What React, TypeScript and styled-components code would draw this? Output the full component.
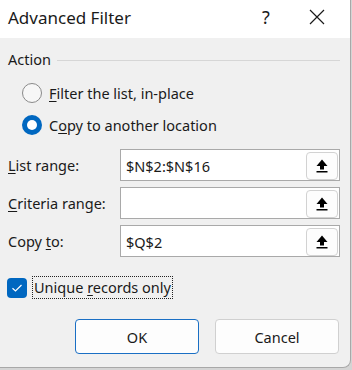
import React from "react";
import styled, { createGlobalStyle } from "styled-components";

const Global = createGlobalStyle`
  html, body { margin: 0; padding: 0; background: #d4d4d4; }
  body { width: 352px; height: 370px; overflow: hidden; }
  * { box-sizing: border-box; }
`;

const FONT = `"Noto Sans", "Open Sans", "Liberation Sans", sans-serif`;

const Dialog = styled.div`
  width: 351px;
  height: 368px;
  background: #f0f0f0;
  border-right: 1px solid #a8a8a8;
  border-bottom: 1px solid #a8a8a8;
  border-bottom-right-radius: 8px;
  font-family: ${FONT};
  color: #1a1a1a;
  overflow: hidden;
  display: flex;
  flex-direction: column;
`;

const TitleBar = styled.div`
  height: 38px;
  background: #ffffff;
  display: flex;
  align-items: center;
  padding-left: 8px;
`;

const Title = styled.div`
  font-size: 17px;
  flex: 1;
  padding-bottom: 4px;
`;

const TitleButton = styled.div<{ $w: number }>`
  width: ${(p) => p.$w}px;
  height: 38px;
  display: flex;
  align-items: center;
  justify-content: center;
  font-size: 18px;
  padding-bottom: 4px;
`;

const Body = styled.div`
  display: flex;
  flex-direction: column;
  padding: 10px 0 0 8px;
`;

const GroupHeader = styled.div`
  display: flex;
  align-items: center;
  gap: 6px;
  font-size: 14.5px;
  height: 22px;
  padding-right: 10px;
`;

const GroupLine = styled.div`
  flex: 1;
  height: 1px;
  background: #d6d6d6;
  margin-top: 2px;
`;

const RadioList = styled.div`
  display: flex;
  flex-direction: column;
  gap: 12px;
  padding: 13px 0 0 14px;
`;

const RadioRow = styled.div`
  display: flex;
  align-items: center;
  gap: 7px;
  height: 20px;
  font-size: 14.5px;
`;

const Radio = styled.div<{ $on?: boolean }>`
  width: 20px;
  height: 20px;
  border-radius: 50%;
  border: ${(p) => (p.$on ? "none" : "1px solid #8a8a8a")};
  background: ${(p) => (p.$on ? "#0067c0" : "#f7f7f7")};
  display: flex;
  align-items: center;
  justify-content: center;
  &::after {
    content: "";
    display: ${(p) => (p.$on ? "block" : "none")};
    width: 10px;
    height: 10px;
    border-radius: 50%;
    background: #ffffff;
  }
`;

const U = styled.span`
  text-decoration: underline;
  text-underline-offset: 2px;
  text-decoration-thickness: 1px;
`;

const Fields = styled.div`
  display: flex;
  flex-direction: column;
  gap: 6px;
  margin-top: 14px;
`;

const FieldRow = styled.div`
  display: grid;
  grid-template-columns: 112px 220px;
  align-items: center;
`;

const FieldLabel = styled.div`
  font-size: 14.5px;
`;

const Input = styled.div`
  height: 32px;
  background: #ffffff;
  border: 1px solid #a9a9a9;
  display: flex;
  align-items: center;
  padding: 2px 1px 1px 5px;
  font-size: 14.5px;
`;

const InputText = styled.div`
  flex: 1;
`;

const RefButton = styled.div`
  width: 32px;
  height: 28px;
  border: 1px solid #d2d2d2;
  border-radius: 4px;
  background: #fdfdfd;
  display: flex;
  align-items: center;
  justify-content: center;
`;

const CheckRow = styled.div`
  display: flex;
  align-items: center;
  gap: 5px;
  margin-top: 19px;
  margin-left: -1px;
`;

const CheckBox = styled.div`
  width: 20px;
  height: 20px;
  border-radius: 4px;
  background: #0067c0;
  display: flex;
  align-items: center;
  justify-content: center;
`;

const FocusLabel = styled.div`
  border: 1px dotted #222;
  padding: 0 1px;
  height: 23px;
  line-height: 20px;
  font-size: 14.5px;
`;

const Buttons = styled.div`
  display: flex;
  justify-content: flex-end;
  gap: 16px;
  margin-top: 20px;
  padding-right: 11px;
`;

const Btn = styled.div<{ $def?: boolean }>`
  width: 124px;
  height: 35px;
  border-radius: 4px;
  background: #fdfdfd;
  border: 1px solid ${(p) => (p.$def ? "#1a6fc4" : "#d0d0d0")};
  display: flex;
  align-items: center;
  justify-content: center;
  font-size: 14.5px;
`;

const Arrow = () => (
  <svg width="12" height="14" viewBox="0 0 12 14">
    <polygon points="6,0.5 11.5,7 0.5,7" fill="#000" />
    <rect x="4" y="6" width="4" height="4.5" fill="#000" />
    <rect x="0.5" y="12" width="11" height="1.5" fill="#000" />
  </svg>
);

const fields = [
  { label: <><U>L</U>ist range:</>, value: "$N$2:$N$16" },
  { label: <><U>C</U>riteria range:</>, value: "" },
  { label: <>Copy <U>t</U>o:</>, value: "$Q$2" },
];

export default function App() {
  return (
    <>
      <Global />
      <Dialog>
        <TitleBar>
          <Title>Advanced Filter</Title>
          <TitleButton $w={36}>?</TitleButton>
          <TitleButton $w={66}>
            <svg width="16" height="16" viewBox="0 0 16 16">
              <path d="M1 1 L15 15 M15 1 L1 15" stroke="#1a1a1a" strokeWidth="1.2" />
            </svg>
          </TitleButton>
        </TitleBar>
        <Body>
          <GroupHeader>
            Action
            <GroupLine />
          </GroupHeader>
          <RadioList>
            <RadioRow>
              <Radio />
              <span><U>F</U>ilter the list, in-place</span>
            </RadioRow>
            <RadioRow>
              <Radio $on />
              <span>C<U>o</U>py to another location</span>
            </RadioRow>
          </RadioList>
          <Fields>
            {fields.map((f, i) => (
              <FieldRow key={i}>
                <FieldLabel>{f.label}</FieldLabel>
                <Input>
                  <InputText>{f.value}</InputText>
                  <RefButton>
                    <Arrow />
                  </RefButton>
                </Input>
              </FieldRow>
            ))}
          </Fields>
          <CheckRow>
            <CheckBox>
              <svg width="12" height="10" viewBox="0 0 12 10">
                <path d="M1.5 5.2 L4.5 8 L10.5 2" fill="none" stroke="#fff" strokeWidth="1.2" />
              </svg>
            </CheckBox>
            <FocusLabel>Unique <U>r</U>ecords only</FocusLabel>
          </CheckRow>
          <Buttons>
            <Btn $def>OK</Btn>
            <Btn>Cancel</Btn>
          </Buttons>
        </Body>
      </Dialog>
    </>
  );
}
